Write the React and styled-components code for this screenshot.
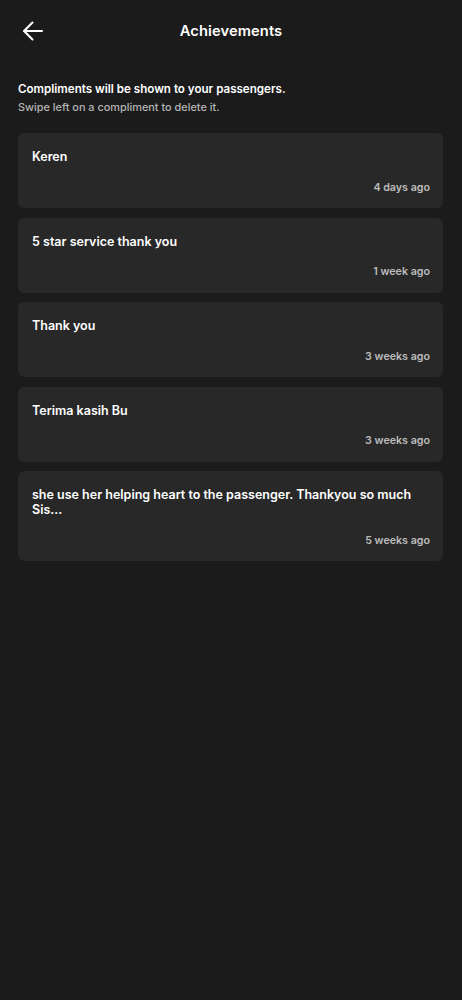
import React from "react";
import styled, { createGlobalStyle } from "styled-components";

const Global = createGlobalStyle`
  html, body { margin: 0; padding: 0; background: #1b1b1b; }
  body { font-family: Inter, "Noto Sans", sans-serif; -webkit-font-smoothing: antialiased; }
`;

const Page = styled.div`
  width: 462px;
  min-height: 1000px;
  background: #1b1b1b;
  color: #fff;
  box-sizing: border-box;
`;

const Header = styled.header`
  height: 62px;
  display: grid;
  grid-template-columns: 64px 1fr 64px;
  align-items: center;
`;

const BackButton = styled.button`
  width: 64px;
  height: 62px;
  background: none;
  border: 0;
  padding: 0 0 0 1px;
  display: flex;
  align-items: center;
  justify-content: center;
  color: #fff;
`;

const Title = styled.h1`
  margin: 0;
  text-align: center;
  font-size: 14.7px;
  font-weight: 600;
  letter-spacing: 0.1px;
`;

const Intro = styled.div`
  padding: 18px 18px 0;
`;

const Lead = styled.p`
  margin: 0;
  font-size: 11.6px;
  font-weight: 600;
  line-height: 18px;
  color: #fff;
`;

const Hint = styled.p`
  margin: 0;
  font-size: 10.9px;
  font-weight: 500;
  line-height: 18px;
  color: #b4b4b4;
`;

const List = styled.div`
  display: flex;
  flex-direction: column;
  gap: 9.5px;
  padding: 17px 19px 0 18px;
`;

const Card = styled.div`
  background: #282828;
  border-radius: 6px;
  padding: 16px 13px 12.5px 14px;
  display: flex;
  flex-direction: column;
`;

const Message = styled.div`
  font-size: 12.5px;
  font-weight: 600;
  line-height: 15px;
  color: #fff;
`;

const Time = styled.div`
  margin-top: 15.5px;
  align-self: flex-end;
  font-size: 10.7px;
  font-weight: 600;
  line-height: 16px;
  color: #bcbcbc;
`;

const items = [
  ["Keren", "4 days ago"],
  ["5 star service thank you", "1 week ago"],
  ["Thank you", "3 weeks ago"],
  ["Terima kasih Bu", "3 weeks ago"],
  ["she use her helping heart to the passenger. Thankyou so much Sis...", "5 weeks ago"],
];

export default function App() {
  return (
    <Page>
      <Global />
      <Header>
        <BackButton aria-label="Back">
          <svg width="24" height="24" viewBox="0 0 24 24" fill="none" stroke="currentColor" strokeWidth="2.1" strokeLinecap="round" strokeLinejoin="round">
            <path d="M21 12H3.5" />
            <path d="M11.5 3.5L3 12l8.5 8.5" />
          </svg>
        </BackButton>
        <Title>Achievements</Title>
        <div />
      </Header>
      <Intro>
        <Lead>Compliments will be shown to your passengers.</Lead>
        <Hint>Swipe left on a compliment to delete it.</Hint>
      </Intro>
      <List>
        {items.map(([m, t], i) => (
          <Card key={i}>
            <Message>{m}</Message>
            <Time>{t}</Time>
          </Card>
        ))}
      </List>
    </Page>
  );
}
